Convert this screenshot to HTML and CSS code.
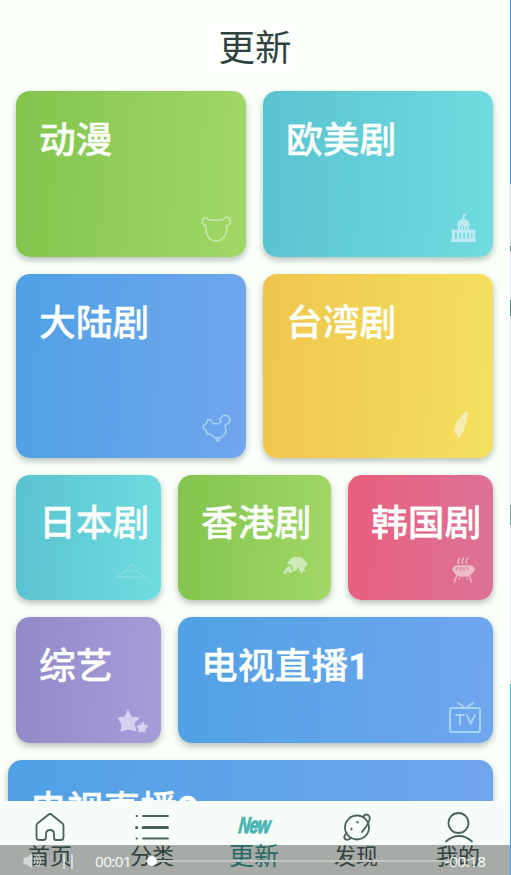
FILE: index.html
```html
<!DOCTYPE html>
<html lang="zh-CN">
<head>
<meta charset="utf-8">
<title>更新</title>
<link rel="stylesheet" href="styles.css">
</head>
<body>
<div class="stage">
  <main class="phone">
    <header class="header"><h1>更新</h1></header>
    <section class="rows">
      <div class="row row-a">
        <article class="card green"><h2>动漫</h2>
          <svg class="art" viewBox="0 0 36 36" fill="none" stroke="currentColor" stroke-width="1.5"><path d="M10 8.500C13 9.500 22 9.500 25 8.500C27 5 32 6 32.500 10C32.500 13 30.500 14.500 28.500 14.500C30 23 25 30 18 30S7 23 8 14.500C5 14.500 4 12.500 4.500 10C5 6 9 6 10 8.500Z"/></svg>
        </article>
        <article class="card cyan"><h2>欧美剧</h2>
          <svg class="art pale" viewBox="0 0 36 36" fill="currentColor"><path d="M18 3h1.500l2 1-2 1.300V8h-1.500zM12 15Q12 9 18.500 7.500Q25 9 25 15ZM13 15h2v4h-2zm3 0h2v4h-2zm3 0h2v4h-2zm3 0h2v4h-2zM6.500 18.500h24v3h-24zM7 21h3v8h-3zm5 0h2.500v8h-2.500zm4 0h2.500v8h-2.500zm4 0h2.500v8h-2.500zm4 0h2.500v8h-2.500zm3.500 0h2.500v8h-2.500zM6 27.500h25v3.500H6z"/></svg>
        </article>
      </div>
      <div class="row row-b">
        <article class="card blue"><h2>大陆剧</h2>
          <svg class="art sky" viewBox="0 0 36 36" fill="none" stroke="currentColor" stroke-width="1.5" stroke-linejoin="round"><path d="M5 14L8 12L10 7.500L13 8L15 11.500L20 12L23 10L22 7L25 3.500L29 3.500L32 6L31 11L27 13L28 19L27 22L23 25.500H17L12 22L9 22L8 18L6 17ZM19 25.500L18 28L20 29L22 27.500L20 26"/></svg>
        </article>
        <article class="card yellow"><h2>台湾剧</h2>
          <svg class="art cream" viewBox="0 0 36 36" fill="currentColor"><path d="M23 0L19 1L13 8Q9 14 9 20L12 23L14 27L16 23Q21 16 22 7L23 3Z"/></svg>
        </article>
      </div>
      <div class="row row-c">
        <article class="card cyan"><h2>日本剧</h2>
          <svg class="art faint" viewBox="0 0 36 36" fill="none" stroke="currentColor"><path d="M3 23L12 18L17 11H20L25 18L33 23ZM12 18L16 16L18 18L21 16L25 18"/></svg>
        </article>
        <article class="card green"><h2>香港剧</h2>
          <svg class="art" viewBox="0 0 36 36" fill="currentColor"><path d="M5 10Q9 1 17 3Q23 4 25 9L25 12L22 14L24 18L21 17L20 20L17 16L17 12L14 17L11 17Q11 10 5 10ZM4 14L7 12L9 14L11 18L8 19L6 17L4 20L1 20Z"/></svg>
        </article>
        <article class="card pink"><h2>韩国剧</h2>
          <svg class="art rose" viewBox="0 0 36 36" fill="none" stroke="currentColor" stroke-width="1.4"><path d="M15 4q-3 3-1 6M19 4q-3 3-1 6M23 4q-3 3-1 6M12 21L9 29M24 21L27 29M14 24v2m8-2v2"/><path d="M8 16q0-3 4-4h13q4 1 4 4q-3 5-7 6h-7q-4-1-7-6Z" fill="currentColor"/><path class="grill" d="M11 16l2-3m2 4l1-4m3 4v-4m4 3l-1-3"/></svg>
        </article>
      </div>
      <div class="row row-d">
        <article class="card purple"><h2>综艺</h2>
          <svg class="art stars lilac" viewBox="0 0 36 36" fill="currentColor" stroke="currentColor" stroke-linejoin="round"><path d="M14 4L17 11L25 12L20 17L22 25L14 23L7 25L8 18L4 12L11 11Z"/><path d="M29 16L30 19L34 20L31 23L31 26L28 25L25 26L25 23L23 20L27 19Z"/></svg>
        </article>
        <article class="card blue"><h2>电视直播<b>1</b></h2>
          <svg class="art tv sky" viewBox="0 0 36 36" fill="none" stroke="currentColor" stroke-width="2" stroke-linecap="round" stroke-linejoin="round"><rect x="3" y="8" width="30" height="24" rx="2"/><path d="M11 3L17 7M26 3L20 7M9 15h8m-4 0v9M20 15l3.500 9L28 15"/></svg>
        </article>
      </div>
      <div class="row row-e">
        <article class="card blue"><h2>电视直播<b>2</b></h2></article>
      </div>
    </section>
  </main>

  <nav class="tabs">
    <a class="tab"><svg viewBox="0 0 36 36"><path d="M4.500 16.500Q4.500 15 6 14L16 6Q18 4 20 6L30 14Q31.500 15 31.500 17V28Q31.500 31 29 31H24Q22 31 22 28V25Q22 21 18 21T14 25V28Q14 31 11 31H8Q4.500 31 4.500 28Z"/></svg><span>首页</span></a>
    <a class="tab"><svg viewBox="0 0 36 36"><path d="M2.500 7h.5M9 7h25M2.500 29.500h.5M9 29.500h25"/><path class="thick" d="M2.500 18.500h.2M9 18.500h24.500"/></svg><span>分类</span></a>
    <a class="tab active"><b class="new">New</b><span>更新</span></a>
    <a class="tab"><svg viewBox="0 0 36 36"><circle cx="19" cy="18.500" r="12"/><path d="M25 8Q27 4.500 30 6T31 12Q29 18 24 23M8.500 24Q5 28 7 30T13 29M13.500 19.500v1M19 13l1 .5"/></svg><span>发现</span></a>
    <a class="tab"><svg viewBox="0 0 36 36"><circle cx="18.500" cy="14" r="10"/><path d="M6 32.500Q12 27 19 27T32 32.500"/></svg><span>我的</span></a>
  </nav>

  <div class="player">
    <svg class="sound" viewBox="0 0 18 16"><path class="fill" d="M1 5h3l5-4v14l-5-4H1z"/><path d="M11 5q2 3 0 6M13 3q4 5 0 10M15 2q5 6 0 12"/></svg>
    <i class="pause"></i>
    <time class="elapsed">00:01</time>
    <div class="track"><i class="knob"></i></div>
    <time class="remain">-00:18</time>
  </div>
  <aside class="edge"></aside>
</div>
</body>
</html>
```
FILE: styles.css
```css
* { box-sizing: border-box; }
body { margin: 0; font-family: "Noto Sans CJK SC", "Noto Sans", sans-serif; }
h1, h2 { margin: 0; }
.stage { position: relative; width: 511px; height: 875px; overflow: hidden; background: #fafff9; }
.phone { height: 801px; overflow: hidden; }
.header { height: 91px; padding: 19px 1px 0 0; text-align: center; }
.header h1 { width: 94px; margin: 0 auto; font-size: 36.5px; line-height: 54px; font-weight: 400; color: #2f4440; background: #fcfffc; white-space: nowrap; }
.rows { display: flex; flex-direction: column; gap: 17px; padding: 0 18px 0 16px; }
.row { display: grid; gap: 17px; }
.row-a { grid-template-columns: 1fr 1fr; height: 166px; }
.row-b { grid-template-columns: 1fr 1fr; height: 184px; }
.row-c { grid-template-columns: 145px 153px 145px; height: 125px; }
.row-d { grid-template-columns: 145px 315px; height: 126px; }
.row-e { height: 126px; margin-left: -8px; }
.card { position: relative; min-width: 0; padding: 19px 0 0 23px; border-radius: 14px; box-shadow: 0 3px 6px rgba(60, 80, 75, .36); }
.row-c .card { padding-top: 18px; }
.row-d .card { padding-top: 19px; }
.row-e .card { padding: 19px 0 0 22px; }
.card h2 { font-size: 36.8px; line-height: 54px; font-weight: 500; color: #fcfffc; white-space: nowrap; -webkit-text-stroke: .3px #fcfffc; }
.card h2 b { font-family: Roboto, sans-serif; font-weight: 700; font-size: 36px; line-height: 1; }
.green { background: linear-gradient(93deg, #82c54d, #a1d766); }
.cyan { background: linear-gradient(93deg, #5ac3d0, #70dbe0); }
.blue { background: linear-gradient(93deg, #50a1e5, #70a6ed); }
.yellow { background: linear-gradient(93deg, #efc64d, #f4e05f); }
.pink { background: linear-gradient(93deg, #e85e7d, #dc7398); }
.purple { background: linear-gradient(93deg, #9289ca, #a79dd8); }
.art { position: absolute; right: 12px; bottom: 10px; width: 36px; height: 36px; color: #cde9b5; }
.row-c .art { right: 12px; bottom: 10px; }
.row-c .green .art { right: 13px; bottom: 10px; }
.row-d .stars { right: 11px; bottom: 1px; }
.row-d .tv { right: 10px; bottom: 7px; }
.pale { color: #bde8f5; }
.row .sky { color: #a5d3f3; }
.cream { color: #f4ecb1; }
.faint { color: #8fe1e8; }
.rose { color: #edbcc8; }
.lilac { color: #d6d1f0; }
.grill { stroke: #d88a9f; }
.tabs { display: flex; height: 74px; width: 510px; margin-left: -1px; background: #f6fcf7; }
.tab { flex: 1; display: flex; flex-direction: column; align-items: center; padding-top: 8px; color: #4b625b; }
.tab svg { width: 36px; height: 36px; fill: none; stroke: currentColor; stroke-width: 1.8; stroke-linecap: round; stroke-linejoin: round; }
.tab .thick { stroke-width: 3; }
.tab span { margin-top: -3px; font-size: 22px; line-height: 24px; white-space: nowrap; }
.tab.active { color: #3f9c96; }
.active span { font-size: 25px; }
.new { height: 36px; font: italic 700 23px/32px "Liberation Sans", sans-serif; letter-spacing: -1px; transform: scaleX(.7) skewX(-8deg); color: #48b5b3; -webkit-text-stroke: 1px #48b5b3; }
.player { position: absolute; inset: 845px 0 0; display: flex; align-items: center; padding: 2px 24px 0 23px; background: rgba(0, 0, 0, .32); color: #f5f8f6; }
.sound { width: 18px; height: 16px; fill: none; stroke: #d4d9d6; }
.sound .fill { fill: #d4d9d6; }
.pause { width: 10px; height: 15px; margin-left: 22px; border: solid #d4d9d6; border-width: 0 2px; margin-right: 1px; }
.player time { font: 15.300px/20px "Noto Sans", sans-serif; letter-spacing: -.6px; white-space: nowrap; }
.elapsed { width: 36px; margin-left: 21px; }
.track { position: relative; width: 305px; height: 2px; margin: 0 0 0 14px; background: #c0c5c2; }
.knob { position: absolute; left: 2px; top: -4px; width: 10px; height: 10px; border-radius: 50%; background: #fafcfb; }
.remain { margin-left: -5px; }
.edge { position: absolute; top: 0; right: 0; width: 1px; height: 875px; background: linear-gradient(#3d9bea 184px, #d9dfe3 184px 246px, #567772 246px 251px, #e1e7ea 251px 300px, #55817b 300px 316px, #dce2e5 316px 505px, #779a9d 505px 525px, #e7edef 525px 684px, #36bdc2 684px 800px, #3c9ee7 800px); }
```
